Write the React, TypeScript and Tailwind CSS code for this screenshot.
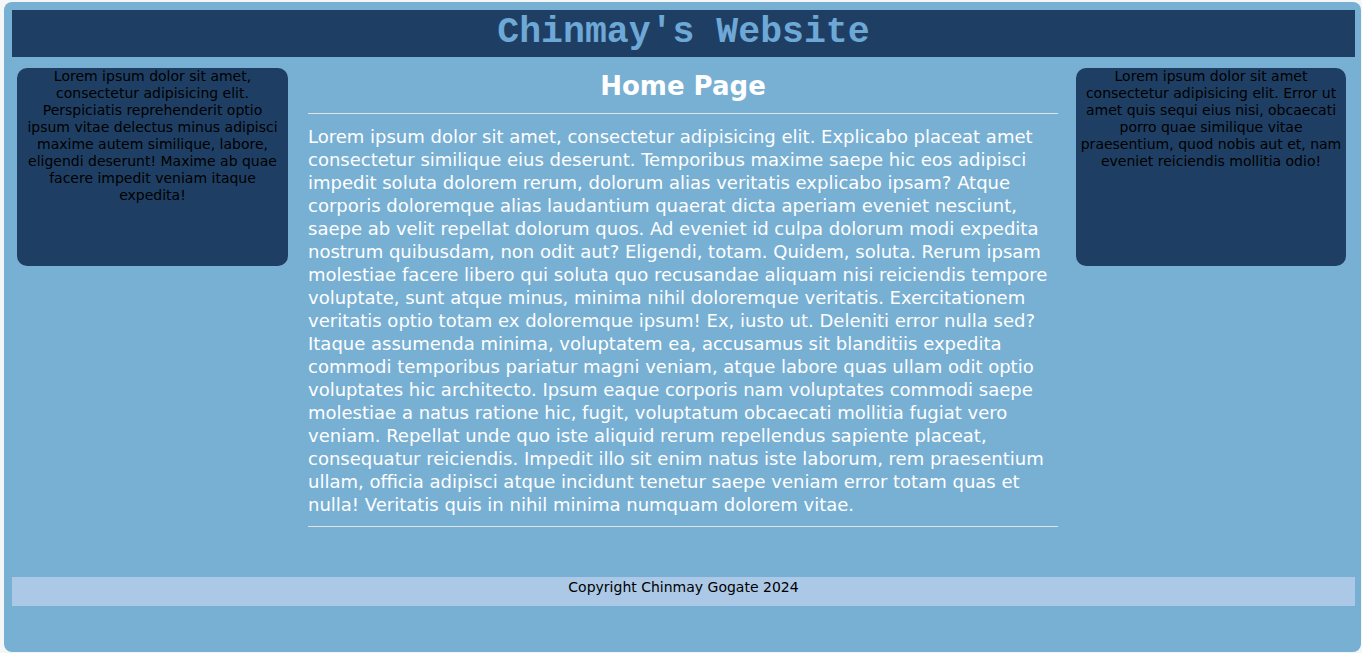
const leftText =
    'Lorem ipsum dolor sit amet, consectetur adipisicing elit. Perspiciatis reprehenderit optio ipsum vitae delectus minus adipisci maxime autem similique, labore, eligendi deserunt! Maxime ab quae facere impedit veniam itaque expedita!';

const rightText =
    'Lorem ipsum dolor sit amet consectetur adipisicing elit. Error ut amet quis sequi eius nisi, obcaecati porro quae similique vitae praesentium, quod nobis aut et, nam eveniet reiciendis mollitia odio!';

const mainText =
    'Lorem ipsum dolor sit amet, consectetur adipisicing elit. Explicabo placeat amet consectetur similique eius deserunt. Temporibus maxime saepe hic eos adipisci impedit soluta dolorem rerum, dolorum alias veritatis explicabo ipsam? Atque corporis doloremque alias laudantium quaerat dicta aperiam eveniet nesciunt, saepe ab velit repellat dolorum quos. Ad eveniet id culpa dolorum modi expedita nostrum quibusdam, non odit aut? Eligendi, totam. Quidem, soluta. Rerum ipsam molestiae facere libero qui soluta quo recusandae aliquam nisi reiciendis tempore voluptate, sunt atque minus, minima nihil doloremque veritatis. Exercitationem veritatis optio totam ex doloremque ipsum! Ex, iusto ut. Deleniti error nulla sed? Itaque assumenda minima, voluptatem ea, accusamus sit blanditiis expedita commodi temporibus pariatur magni veniam, atque labore quas ullam odit optio voluptates hic architecto. Ipsum eaque corporis nam voluptates commodi saepe molestiae a natus ratione hic, fugit, voluptatum obcaecati mollitia fugiat vero veniam. Repellat unde quo iste aliquid rerum repellendus sapiente placeat, consequatur reiciendis. Impedit illo sit enim natus iste laborum, rem praesentium ullam, officia adipisci atque incidunt tenetur saepe veniam error totam quas et nulla! Veritatis quis in nihil minima numquam dolorem vitae.';

const Sidebar = ({ text }: { text: string }) => (
    <aside className="h-[198px] shrink-0 rounded-[10px] bg-[#1e3f63] px-[3px] text-center text-[14px] leading-[17px] text-black">
        {text}
    </aside>
);

export default function App() {
    return (
        <div className="min-h-[653px] bg-[#f4f6f8] pt-[2px] pl-[4px] pr-[1px] font-['DejaVu_Sans',sans-serif]">
            <div className="h-[650px] rounded-[8px] bg-[#78b0d4] pt-[8px] pl-[8px] pr-[6px]">
                <header className="flex h-[47px] items-center justify-center bg-[#1e3f63]">
                    <h1 className="font-['Liberation_Mono',monospace] text-[36.5px] font-bold leading-none text-[#6ea8d6]">
                        Chinmay's Website
                    </h1>
                </header>

                <div className="mt-[11px] flex items-start pl-[5px]">
                    <div className="w-[271px]">
                        <Sidebar text={leftText} />
                    </div>
                    <main className="ml-[20px] w-[750px] shrink-0 text-white">
                        <h2 className="h-[36px] text-center text-[26px] font-bold leading-[36px]">Home Page</h2>
                        <hr className="mt-[9px] border-0 border-t border-[#dfe3e6]" />
                        <p className="mt-[11px] text-[18px] leading-[23px]">{mainText}</p>
                        <hr className="mt-[10px] border-0 border-t border-[#dfe3e6]" />
                    </main>
                    <div className="ml-[18px] w-[270px]">
                        <Sidebar text={rightText} />
                    </div>
                </div>

                <footer className="mt-[50px] h-[29px] bg-[#abc9e6] pt-[2px] text-center text-[14px] leading-[17px] text-black">
                    Copyright Chinmay Gogate 2024
                </footer>
            </div>
        </div>
    );
}
